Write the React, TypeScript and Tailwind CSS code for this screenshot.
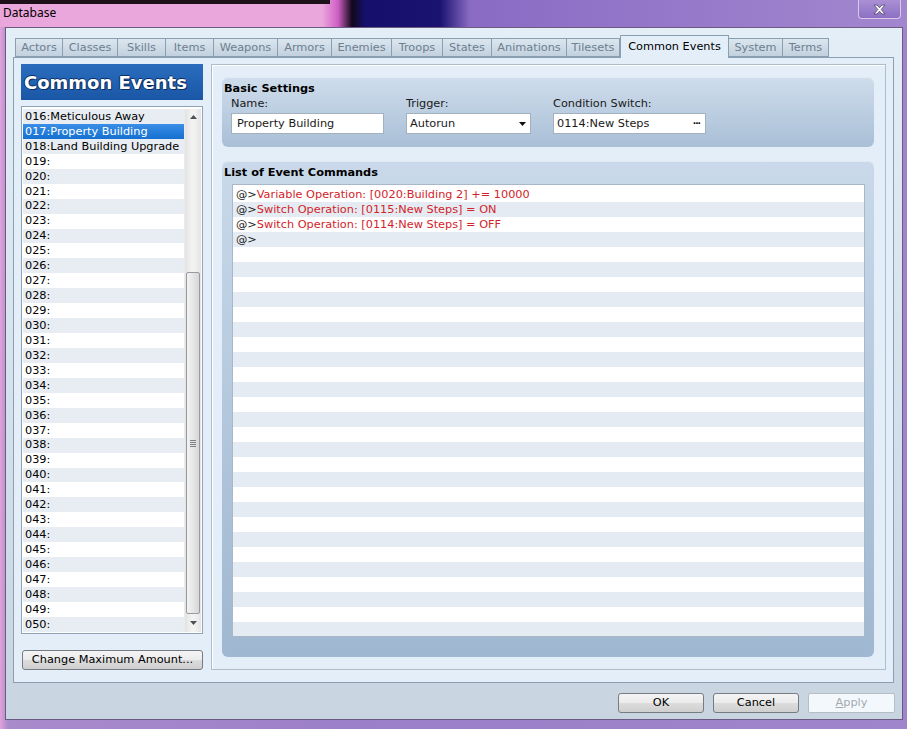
import React from 'react';

const tabs: { label: string; w: number }[] = [
  { label: 'Actors', w: 48 },
  { label: 'Classes', w: 55 },
  { label: 'Skills', w: 48 },
  { label: 'Items', w: 48 },
  { label: 'Weapons', w: 64 },
  { label: 'Armors', w: 54 },
  { label: 'Enemies', w: 60 },
  { label: 'Troops', w: 51 },
  { label: 'States', w: 49 },
  { label: 'Animations', w: 75 },
  { label: 'Tilesets', w: 53 },
  { label: 'Common Events', w: 109 },
  { label: 'System', w: 54 },
  { label: 'Terms', w: 46 },
];

const events: string[] = [
  '016:Meticulous Away',
  '017:Property Building',
  '018:Land Building Upgrade',
];
for (let i = 19; i <= 50; i++) events.push(`0${i}:`);

const commands: string[] = [
  'Variable Operation: [0020:Building 2] += 10000',
  'Switch Operation: [0115:New Steps] = ON',
  'Switch Operation: [0114:New Steps] = OFF',
  '',
];

function Tab({ label, w }: { label: string; w: number }) {
  const active = label === 'Common Events';
  if (active) {
    return (
      <div
        style={{ width: w }}
        className="h-[23px] -mb-px relative z-10 flex items-center justify-center border border-b-0 border-[#8b9fb3] bg-[#e4eef8] text-black"
      >
        {label}
      </div>
    );
  }
  return (
    <div
      style={{ width: w }}
      className="h-[19px] pt-px flex items-center justify-center border border-l-0 first:border-l border-[#8b9fb3] bg-[linear-gradient(180deg,#dbe6ef,#c2d1de)] text-[#6d7f90]"
    >
      {label}
    </div>
  );
}

function WinButton({ children, className = '', disabled = false }: { children: React.ReactNode; className?: string; disabled?: boolean }) {
  if (disabled) {
    return (
      <div className={`h-[20px] flex items-center justify-center rounded-[2px] border border-[#b5bec7] bg-[#f3f8fd] text-[#a3a9ae] ${className}`}>
        {children}
      </div>
    );
  }
  return (
    <div className={`h-[20px] flex items-center justify-center rounded-[3px] border border-[#767c82] bg-[linear-gradient(180deg,#f4f4f4_0%,#ebebeb_50%,#dcdcdc_51%,#cfcfcf_100%)] text-black ${className}`}>
      {children}
    </div>
  );
}

function ScrollBar() {
  return (
    <div className="w-[17px] h-full flex flex-col bg-[linear-gradient(90deg,#e3e3e3,#f2f2f2_40%,#f2f2f2_60%,#e3e3e3)] border-l border-[#ececec]">
      <div className="h-[16px] flex items-center justify-center">
        <svg width="7" height="4" viewBox="0 0 7 4"><path d="M0 4 L3.5 0 L7 4 Z" fill="#4d5157" /></svg>
      </div>
      <div className="h-[147px]" />
      <div className="h-[342px] mx-[1px] rounded-[2px] border border-[#979a9e] bg-[linear-gradient(90deg,#f3f3f3,#e6e6e6_50%,#d6d6d6)] flex items-center justify-center">
        <div className="flex flex-col gap-[1px]">
          <div className="w-[6px] h-px bg-[#7b7f85]" />
          <div className="w-[6px] h-px bg-[#7b7f85]" />
          <div className="w-[6px] h-px bg-[#7b7f85]" />
          <div className="w-[6px] h-px bg-[#7b7f85]" />
        </div>
      </div>
      <div className="flex-1 flex items-center justify-center">
        <svg width="7" height="4" viewBox="0 0 7 4"><path d="M0 0 L3.5 4 L7 0 Z" fill="#4d5157" /></svg>
      </div>
    </div>
  );
}

export default function App() {
  return (
    <div
      className="w-[907px] h-[729px] flex flex-col text-[11.3px] leading-none [font-family:'DejaVu_Sans',Verdana,sans-serif] [background:linear-gradient(#1d1018,#1d1018)_0_0/330px_4px_no-repeat,linear-gradient(90deg,#eaa7dc_0px,#eaa7dc_322px,#cf5fc4_338px,#12081a_352px,#15106b_365px,#1a1370_440px,#8a6bc4_470px,#a287cf_100%)_0_0/907px_27px_no-repeat,linear-gradient(90deg,#e2a2d9_0px,#a98bcc_8px,#9b7fc8_40%,#9f85cb_100%)]"
    >
      {/* title bar */}
      <div className="h-[27px] flex items-start justify-between">
        <div className="pl-[3px] pt-[7px] text-[12px] text-black [font-family:'Noto_Sans',sans-serif]">Database</div>
        <div className="mr-[6px] w-[43px] h-[19px] rounded-b-[4px] border border-t-0 border-[#d8c8ea] bg-[linear-gradient(180deg,#a990d4,#8d70c4)] flex items-center justify-center">
          <svg width="13" height="11" viewBox="0 0 13 11">
            <path d="M1 1 L4 1 L6.5 3.8 L9 1 L12 1 L8.2 5.5 L12 10 L9 10 L6.5 7.2 L4 10 L1 10 L4.8 5.5 Z" fill="#ffffff" stroke="#5a4b6e" strokeWidth="0.9" />
          </svg>
        </div>
      </div>

      {/* client area */}
      <div className="ml-[5px] mr-[4px] h-[693px] border border-[#6b5b84] bg-[linear-gradient(180deg,#e4eef7,#d3dfea_60%,#c8d5e1)] flex flex-col">
        {/* tabs */}
        <div className="pl-[9px] pt-[7px] flex items-end">
          {tabs.map((t) => (
            <Tab key={t.label} label={t.label} w={t.w} />
          ))}
        </div>

        {/* tab panel */}
        <div className="ml-[7px] w-[881px] h-[626px] border border-[#8b9fb3] bg-[#e4eef8] flex pl-[7px] pt-[6px] pb-[12px]">
          {/* left column */}
          <div className="w-[182px] flex flex-col">
            <div className="h-[36px] flex items-center pl-[3px] pt-px bg-[linear-gradient(180deg,#2a6dbd,#1a56a6)] text-white font-bold text-[18px] [text-shadow:1px_1px_0_#0b2f63,-1px_0_0_#0b2f63,0_-1px_0_#0b2f63]">
              Common Events
            </div>
            <div className="mt-[6px] h-[528px] border border-[#8fa3b7] bg-white flex pt-[2px] px-px pb-px">
              <div className="flex-1 flex flex-col">
                {events.map((e, i) => {
                  const sel = i === 1;
                  return (
                    <div
                      key={e}
                      className={`h-[15px] flex items-center pl-[2px] ${sel ? 'bg-[linear-gradient(180deg,#3a8ee6,#1570d0)] text-white' : i % 2 === 0 ? 'bg-[#e8edf3] text-black' : 'bg-white text-black'}`}
                    >
                      {e}
                    </div>
                  );
                })}
              </div>
              <ScrollBar />
            </div>
            <WinButton className="mt-[16px] w-[181px] ml-px">Change Maximum Amount...</WinButton>
          </div>

          {/* right frame */}
          <div className="ml-[8px] w-[675px] h-[606px] border border-[#aebdcc] shadow-[inset_1px_1px_0_#ffffff] flex flex-col pl-[10px] pt-[12px]">
            {/* basic settings */}
            <div className="w-[652px] h-[70px] rounded-[6px] bg-[linear-gradient(180deg,#cfddec,#a9bfd6)] shadow-[inset_0_1px_0_#e3ecf5] pl-[2px] pt-[6px] flex flex-col">
              <div className="font-bold text-black">Basic Settings</div>
              <div className="flex pl-[7px] mt-[4px] gap-[22px] text-[#1a1a1a]">
                <div className="flex flex-col">
                  <div className="h-[11px]">Name:</div>
                  <div className="mt-[4px] w-[153px] h-[21px] bg-white border border-[#a3b0bd] flex items-center pl-[5px]">Property Building</div>
                </div>
                <div className="flex flex-col">
                  <div className="h-[11px]">Trigger:</div>
                  <div className="mt-[4px] w-[125px] h-[21px] bg-white border border-[#a3b0bd] flex items-center justify-between pl-[3px] pr-[4px]">
                    <span>Autorun</span>
                    <svg width="7" height="4" viewBox="0 0 7 4"><path d="M0 0 L3.5 4 L7 0 Z" fill="#111" /></svg>
                  </div>
                </div>
                <div className="flex flex-col">
                  <div className="h-[11px]">Condition Switch:</div>
                  <div className="mt-[4px] w-[153px] h-[21px] bg-white border border-[#a3b0bd] flex items-center justify-between pl-[3px] pr-[5px]">
                    <span>0114:New Steps</span>
                    <span className="font-bold text-[9px] tracking-[-1px] text-black">···</span>
                  </div>
                </div>
              </div>
            </div>

            {/* list of event commands */}
            <div className="mt-[14px] w-[652px] h-[496px] rounded-[6px] bg-[linear-gradient(180deg,#c9d9ea,#9fb7d0)] shadow-[inset_0_1px_0_#dfe9f4] pl-[2px] pt-[6px] flex flex-col">
              <div className="font-bold text-black">List of Event Commands</div>
              <div className="mt-[6px] ml-[8px] w-[633px] h-[453px] bg-white border border-[#a8b8c8] flex flex-col pt-[2px] overflow-hidden">
                {Array.from({ length: 30 }).map((_, i) => (
                  <div key={i} className={`h-[15px] shrink-0 flex items-center pl-[3px] ${i % 2 === 0 ? 'bg-white' : 'bg-[#e5ebf2]'}`}>
                    {i < commands.length && (
                      <>
                        <span className="text-[#222]">@&gt;</span>
                        <span className="text-[#d3232a]">{commands[i]}</span>
                      </>
                    )}
                  </div>
                ))}
              </div>
            </div>
          </div>
        </div>

        {/* bottom buttons */}
        <div className="mt-[10px] flex justify-end pr-[7px] gap-[9px]">
          <WinButton className="w-[86px]">OK</WinButton>
          <WinButton className="w-[86px]">Cancel</WinButton>
          <WinButton disabled className="w-[87px]">
            <span><span className="underline">A</span>pply</span>
          </WinButton>
        </div>
      </div>
    </div>
  );
}
